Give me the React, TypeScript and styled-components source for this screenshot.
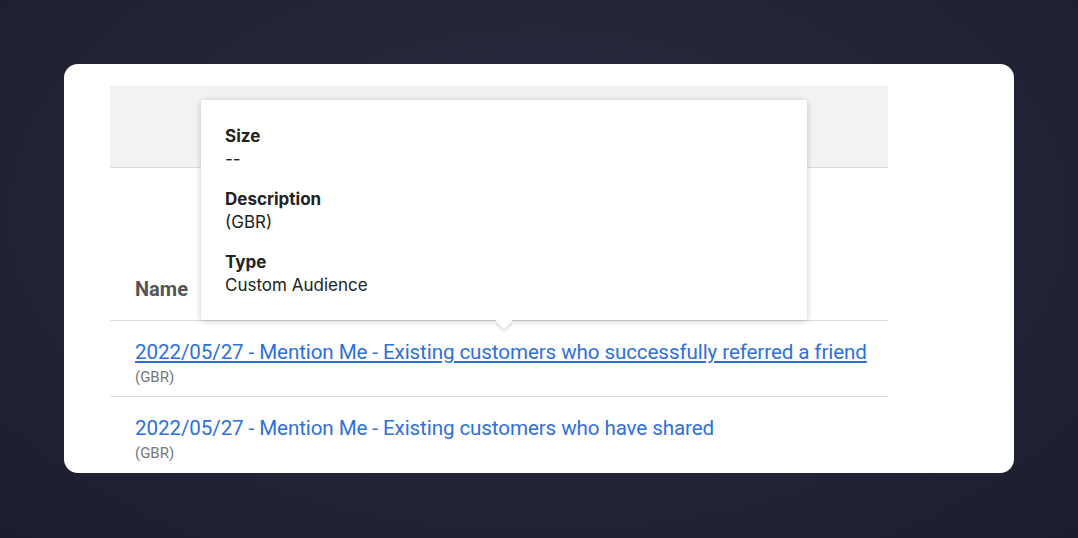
import React from "react";
import styled, { createGlobalStyle } from "styled-components";

const Global = createGlobalStyle`
  html, body { margin: 0; padding: 0; }
  body {
    width: 1078px;
    height: 538px;
    overflow: hidden;
    background: radial-gradient(ellipse at 50% 40%, #2b2c42 0%, #222336 60%, #1c1d2e 100%);
  }
`;

const Stage = styled.div`
  padding: 64px 64px 0 64px;
  height: 538px;
  box-sizing: border-box;
`;

const Card = styled.div`
  position: relative;
  background: #fff;
  border-radius: 14px;
  height: 409px;
  overflow: hidden;
  padding: 22px 126px 0 46px;
  box-sizing: border-box;
`;

const HeadBand = styled.div`
  height: 81px;
  background: #f2f2f2;
  border-bottom: 1px solid #dcdcdc;
`;

const NameHeader = styled.div`
  height: 153px;
  display: flex;
  align-items: flex-end;
  padding: 0 0 19px 25px;
  box-sizing: border-box;
  border-bottom: 1px solid #dcdcdc;
  font: 700 20px Roboto, "Liberation Sans", sans-serif;
  color: #555;
`;

const Row = styled.div<{ $last?: boolean }>`
  height: 76px;
  padding: 19px 0 0 25px;
  box-sizing: border-box;
  border-bottom: ${(p) => (p.$last ? "none" : "1px solid #dcdcdc")};
`;

const Link = styled.a<{ $underline?: boolean }>`
  display: block;
  font: 400 20.6px Roboto, "Liberation Sans", sans-serif;
  letter-spacing: -0.1px;
  color: #2f6fdb;
  text-decoration: ${(p) => (p.$underline ? "underline" : "none")};
  text-underline-offset: 2px;
  line-height: 24px;
`;

const Sub = styled.div`
  font: 400 15px Roboto, "Liberation Sans", sans-serif;
  color: #777;
  margin-top: 4px;
`;

const Tooltip = styled.div`
  position: absolute;
  left: 137px;
  top: 36px;
  width: 606px;
  height: 220px;
  box-sizing: border-box;
  padding: 25px 24px;
  background: #fff;
  border-radius: 3px;
  box-shadow: 0 1px 6px rgba(0, 0, 0, 0.22);
  font-family: Inter, "Liberation Sans", sans-serif;
  font-size: 17px;
  color: #222;
  &::after {
    content: "";
    position: absolute;
    left: 297px;
    bottom: -7px;
    width: 12px;
    height: 12px;
    background: #fff;
    transform: rotate(45deg);
    box-shadow: 2px 2px 3px rgba(0, 0, 0, 0.12);
  }
`;

const Field = styled.div`
  margin-bottom: 17px;
  line-height: 23px;
`;

const Label = styled.div`
  font-weight: 700;
`;

export default function App() {
  return (
    <Stage>
      <Global />
      <Card>
        <HeadBand />
        <NameHeader>Name</NameHeader>
        <Row>
          <Link href="#" $underline>
            2022/05/27 - Mention Me - Existing customers who successfully referred a friend
          </Link>
          <Sub>(GBR)</Sub>
        </Row>
        <Row $last>
          <Link href="#">2022/05/27 - Mention Me - Existing customers who have shared</Link>
          <Sub>(GBR)</Sub>
        </Row>
        <Tooltip>
          <Field>
            <Label>Size</Label>
            <div>--</div>
          </Field>
          <Field>
            <Label>Description</Label>
            <div>(GBR)</div>
          </Field>
          <Field>
            <Label>Type</Label>
            <div>Custom Audience</div>
          </Field>
        </Tooltip>
      </Card>
    </Stage>
  );
}
